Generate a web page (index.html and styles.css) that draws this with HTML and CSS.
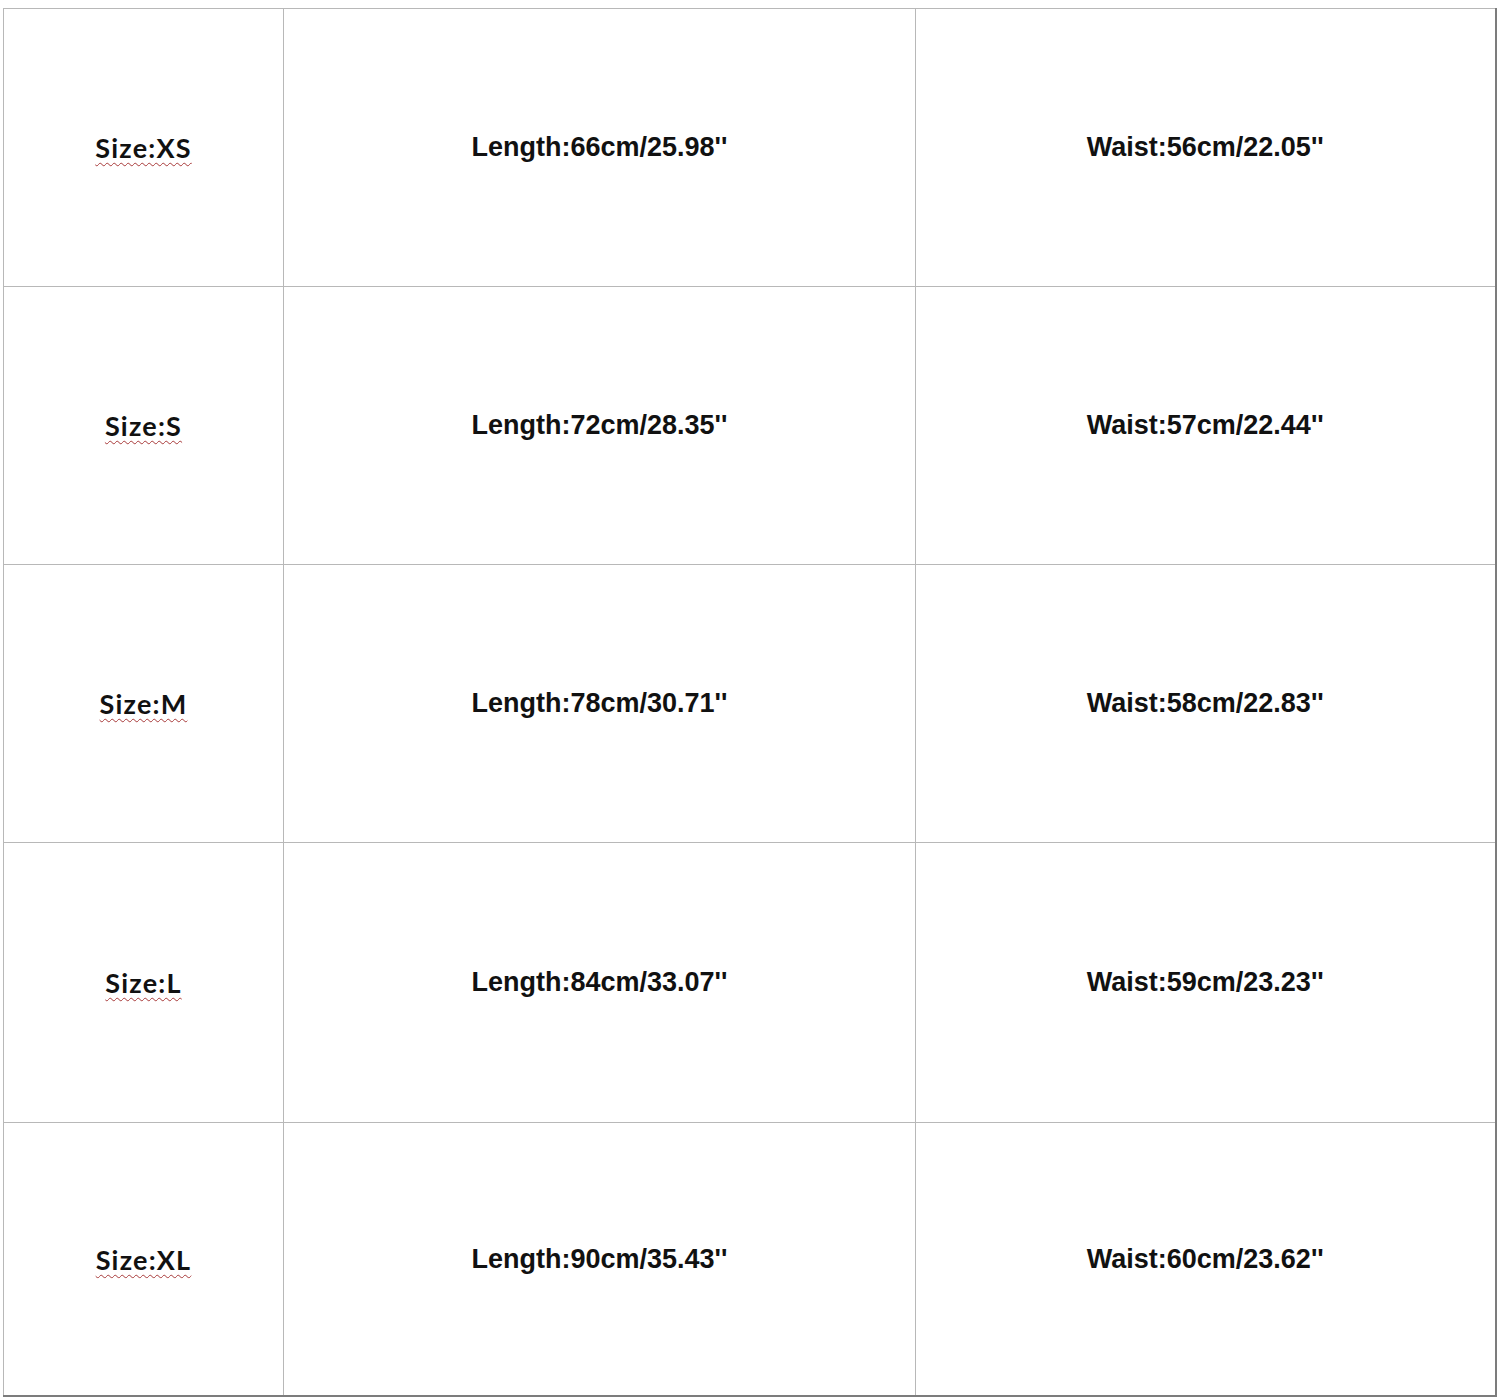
FILE: index.html
```html
<!DOCTYPE html>
<html lang="en">
<head>
<meta charset="utf-8">
<title>Size Chart</title>
<link rel="stylesheet" href="styles.css">
</head>
<body>
<table class="chart">
  <colgroup>
    <col class="c-size">
    <col class="c-len">
    <col class="c-waist">
  </colgroup>
  <tbody>
    <tr><td class="size"><span class="spell">Size:XS</span></td><td class="val">Length:66cm/25.98''</td><td class="val">Waist:56cm/22.05''</td></tr>
    <tr><td class="size"><span class="spell">Size:S</span></td><td class="val">Length:72cm/28.35''</td><td class="val">Waist:57cm/22.44''</td></tr>
    <tr><td class="size"><span class="spell">Size:M</span></td><td class="val">Length:78cm/30.71''</td><td class="val">Waist:58cm/22.83''</td></tr>
    <tr class="tall"><td class="size"><span class="spell">Size:L</span></td><td class="val">Length:84cm/33.07''</td><td class="val">Waist:59cm/23.23''</td></tr>
    <tr class="last"><td class="size"><span class="spell">Size:XL</span></td><td class="val">Length:90cm/35.43''</td><td class="val">Waist:60cm/23.62''</td></tr>
  </tbody>
</table>
</body>
</html>
```
FILE: styles.css
```css
html, body {
  margin: 0;
  padding: 0;
  background: #ffffff;
}

body {
  padding: 8px 0 0 3px;
}

.chart {
  border-collapse: collapse;
  table-layout: fixed;
  width: 1492px;
  border-left: 1px solid #b8b8b8;
  border-top: 1px solid #b8b8b8;
  border-right: 2px solid #7c7c7c;
  border-bottom: 2px solid #7c7c7c;
}

.c-size { width: 280px; }
.c-len { width: 632px; }
.c-waist { width: 580px; }

.chart td {
  height: 277px;
  padding: 0;
  border: 1px solid #b8b8b8;
  text-align: center;
  vertical-align: middle;
  color: #111111;
}

.chart tr.tall td {
  height: 279px;
}

.chart tr.last td {
  height: 272px;
  border-bottom: 2px solid #7c7c7c;
}

.chart td:last-child {
  border-right: 2px solid #7c7c7c;
}

.size {
  font-family: Lato, "Open Sans", sans-serif;
  font-weight: 700;
  font-size: 27px;
  letter-spacing: 1.2px;
}

.spell {
  text-decoration: underline wavy #a83a3a;
  text-decoration-thickness: 1px;
  text-underline-offset: 4px;
}

.val {
  font-family: "Liberation Sans", Arial, sans-serif;
  font-weight: 700;
  font-size: 27px;
}
```
